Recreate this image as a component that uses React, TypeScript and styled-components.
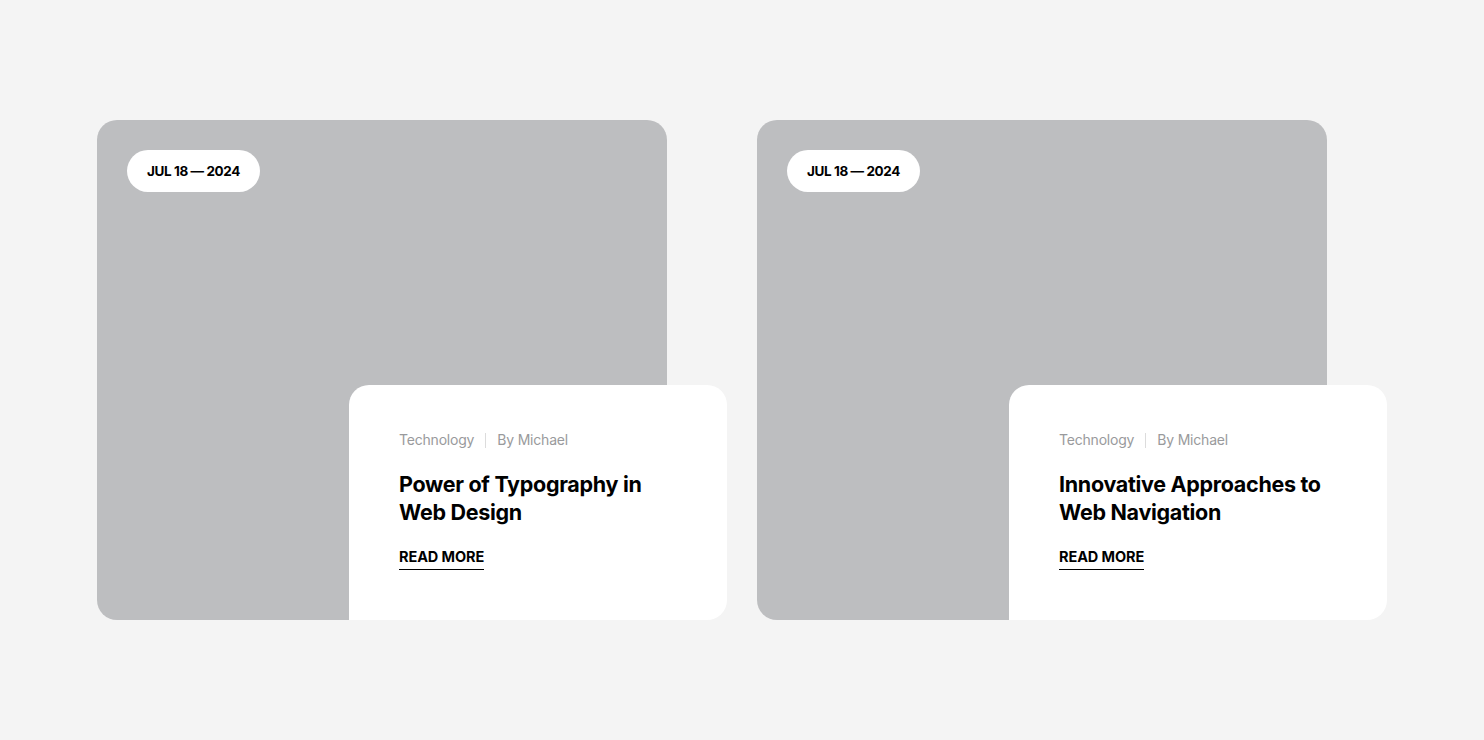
import React from 'react';
import styled, { createGlobalStyle } from 'styled-components';

const GlobalStyle = createGlobalStyle`
    body {
        margin: 0;
        background: #f4f4f4;
        font-family: Inter, 'Noto Sans', sans-serif;
    }
`;

const Page: any = styled.main`
    display: flex;
    justify-content: center;
    gap: 30px;
    padding-top: 120px;
`;

const Card: any = styled.article`
    display: grid;
    grid-template-columns: 252px 318px 60px;
    grid-template-rows: 265px auto;
    width: 630px;
`;

const Thumb: any = styled.div`
    grid-column: 1 / 3;
    grid-row: 1 / 3;
    height: 500px;
    padding: 30px;
    box-sizing: border-box;
    background: #bdbec0;
    border-radius: 20px;
`;

const DateBadge: any = styled.span`
    display: inline-flex;
    align-items: center;
    height: 42px;
    padding: 0 20px;
    background: #fff;
    border-radius: 21px;
    font-size: 13.5px;
    font-weight: 700;
    color: #000;
    letter-spacing: -0.4px;
`;

const Body: any = styled.div`
    grid-column: 2 / 4;
    grid-row: 2;
    z-index: 1;
    display: flex;
    flex-direction: column;
    align-items: flex-start;
    gap: 20px;
    padding: 45px 50px 48px;
    background: #fff;
    border-radius: 20px 20px 20px 0;
`;

const Meta: any = styled.div`
    display: flex;
    align-items: center;
    font-size: 14px;
    line-height: 20px;
    color: #999a9c;
    letter-spacing: -0.2px;
`;

const Divider: any = styled.span`
    width: 1px;
    height: 15px;
    margin: 0 11px;
    background: #dcdcdc;
`;

const Title: any = styled.h3`
    margin: 0;
    font-size: 21.5px;
    line-height: 28px;
    font-weight: 700;
    color: #000;
    letter-spacing: -0.3px;
`;

const ReadMore: any = styled.a`
    font-size: 14.5px;
    line-height: 21px;
    padding-bottom: 2px;
    font-weight: 700;
    color: #000;
    text-decoration: none;
    border-bottom: 1.5px solid #000;
    letter-spacing: -0.1px;
`;

interface IPost {
    date: string;
    category: string;
    author: string;
    title: string[];
}

const posts: IPost[] = [
    {
        date: 'JUL 18 — 2024',
        category: 'Technology',
        author: 'By Michael',
        title: ['Power of Typography in', 'Web Design'],
    },
    {
        date: 'JUL 18 — 2024',
        category: 'Technology',
        author: 'By Michael',
        title: ['Innovative Approaches to', 'Web Navigation'],
    },
];

const App = () => {
    return (
        <>
            <GlobalStyle />
            <Page>
                {posts.map((post, i) => (
                    <Card key={i}>
                        <Thumb>
                            <DateBadge>{post.date}</DateBadge>
                        </Thumb>
                        <Body>
                            <Meta>
                                {post.category}
                                <Divider />
                                {post.author}
                            </Meta>
                            <Title>
                                {post.title[0]}
                                <br />
                                {post.title[1]}
                            </Title>
                            <ReadMore href='#'>READ MORE</ReadMore>
                        </Body>
                    </Card>
                ))}
            </Page>
        </>
    );
};

export default App;
